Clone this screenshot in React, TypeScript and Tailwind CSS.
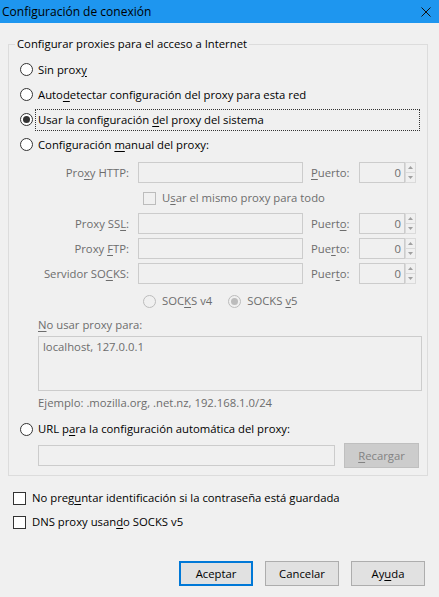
import React from 'react';
import clsx from 'clsx';

const U = ({ children }: { children: React.ReactNode }) => (
  <span className="underline decoration-1 underline-offset-[2px]">{children}</span>
);

const Radio = ({ checked, disabled }: { checked?: boolean; disabled?: boolean }) => (
  <span
    className={clsx(
      'flex h-[13px] w-[13px] shrink-0 items-center justify-center rounded-full border',
      disabled ? 'border-[#bcbcbc] bg-[#f0f0f0]' : 'border-[#333333] bg-white'
    )}
  >
    {checked && (
      <span
        className={clsx(
          'h-[7px] w-[7px] rounded-full',
          disabled ? 'bg-[#bcbcbc]' : 'bg-[#333333]'
        )}
      />
    )}
  </span>
);

const Checkbox = ({ disabled }: { disabled?: boolean }) => (
  <span
    className={clsx(
      'block h-[13px] w-[13px] shrink-0 border',
      disabled ? 'border-[#bcbcbc] bg-[#f0f0f0]' : 'border-[#333333] bg-white'
    )}
  />
);

const DisabledInput = ({ className }: { className?: string }) => (
  <div className={clsx('h-[21px] border border-[#cccccc] bg-[#f0f0f0]', className)} />
);

const PortBox = () => (
  <div className="flex h-[21px] items-stretch">
    <div className="flex w-[46px] items-center justify-end border border-[#cccccc] pr-[3px] text-[#6d6d6d]">
      0
    </div>
    <div className="flex w-[11px] flex-col border border-[#dadada]">
      <div className="flex flex-1 items-center justify-center border-b border-[#dadada]">
        <svg width="5" height="3" viewBox="0 0 5 3">
          <path d="M0 3 L2.5 0 L5 3 Z" fill="#a0a0a0" />
        </svg>
      </div>
      <div className="flex flex-1 items-center justify-center">
        <svg width="5" height="3" viewBox="0 0 5 3">
          <path d="M0 0 L2.5 3 L5 0 Z" fill="#a0a0a0" />
        </svg>
      </div>
    </div>
  </div>
);

type ProxyRowProps = {
  label: React.ReactNode;
  port: React.ReactNode;
  className?: string;
};

const ProxyRow = ({ label, port, className }: ProxyRowProps) => (
  <div className={clsx('flex h-[21px] items-center text-[#6d6d6d]', className)}>
    <span className="w-[109px] text-right">{label}</span>
    <DisabledInput className="ml-[9px] w-[165px]" />
    <span className="ml-[8px] w-[48px]">{port}</span>
    <PortBox />
  </div>
);

const Button = ({
  children,
  primary,
}: {
  children: React.ReactNode;
  primary?: boolean;
}) => (
  <button
    className={clsx(
      'flex h-[25px] w-[74px] items-center justify-center bg-[#e1e1e1] text-black',
      primary ? 'border-2 border-[#0078d7]' : 'border border-[#adadad]'
    )}
  >
    <span>{children}</span>
  </button>
);

export default function App() {
  return (
    <div className="flex h-[597px] w-[439px] flex-col bg-[#f0f0f0] font-['Segoe_UI','Open_Sans',sans-serif] text-[11.3px] leading-[16px] text-black">
      <div className="flex h-[23px] shrink-0 items-center justify-between bg-[#1e96ef] pl-[2px] pr-[8px] text-[12px]">
        <span>Configuración de conexión</span>
        <svg width="10" height="10" viewBox="0 0 10 10">
          <path d="M0.5 0.5 L9.5 9.5 M9.5 0.5 L0.5 9.5" stroke="#111" strokeWidth="1" />
        </svg>
      </div>

      <fieldset className="ml-[8px] mt-[13px] w-[420px] border border-[#dcdcdc] p-0 pb-[7px]">
        <legend className="ml-[6px] px-[2px] leading-[16px]">
          Configurar proxies para el acceso a Internet
        </legend>
        <div className="flex flex-col pl-[11px]">
          <div className="mt-[5px] flex h-[25px] items-center">
            <Radio />
            <span className="ml-[5px]">
              Sin prox<U>y</U>
            </span>
          </div>
          <div className="flex h-[25px] items-center">
            <Radio />
            <span className="ml-[5px]">
              Auto<U>d</U>etectar configuración del proxy para esta red
            </span>
          </div>
          <div className="flex h-[25px] items-center">
            <Radio checked />
            <span className="ml-[2px] flex h-[22px] w-[385px] items-center border border-dotted border-[#333333] pl-[2px]">
              <span>
                Usar la configuración <U>d</U>el proxy del sistema
              </span>
            </span>
          </div>
          <div className="flex h-[25px] items-center">
            <Radio />
            <span className="ml-[5px]">
              Configuración <U>m</U>anual del proxy:
            </span>
          </div>

          <ProxyRow
            className="mt-[5px]"
            label={
              <>
                Pro<U>x</U>y HTTP:
              </>
            }
            port={
              <>
                <U>P</U>uerto:
              </>
            }
          />
          <div className="mt-[3px] flex h-[24px] items-center pl-[123px] text-[#6d6d6d]">
            <Checkbox disabled />
            <span className="ml-[6px]">
              U<U>s</U>ar el mismo proxy para todo
            </span>
          </div>
          <ProxyRow
            className="mt-[3px]"
            label={
              <>
                Proxy SS<U>L</U>:
              </>
            }
            port={
              <>
                Puert<U>o</U>:
              </>
            }
          />
          <ProxyRow
            className="mt-[4px]"
            label={
              <>
                Proxy <U>F</U>TP:
              </>
            }
            port={
              <>
                Pue<U>r</U>to:
              </>
            }
          />
          <ProxyRow
            className="mt-[4px]"
            label={
              <>
                Servidor SO<U>C</U>KS:
              </>
            }
            port={
              <>
                Puer<U>t</U>o:
              </>
            }
          />

          <div className="mt-[5px] flex h-[24px] items-center pl-[123px] text-[#6d6d6d]">
            <Radio disabled />
            <span className="ml-[6px]">
              SOC<U>K</U>S v4
            </span>
            <span className="ml-[16px]">
              <Radio disabled checked />
            </span>
            <span className="ml-[6px]">
              SOCKS <U>v</U>5
            </span>
          </div>

          <div className="ml-[18px] mt-[4px] h-[16px] text-[#6d6d6d]">
            <U>N</U>o usar proxy para:
          </div>
          <div className="ml-[18px] mt-[3px] h-[55px] w-[384px] border border-[#cccccc] px-[4px] pt-[2px] text-[#6d6d6d]">
            localhost, 127.0.0.1
          </div>
          <div className="ml-[18px] mt-[4px] h-[16px] text-[#6d6d6d]">
            Ejemplo: .mozilla.org, .net.nz, 192.168.1.0/24
          </div>

          <div className="mt-[6px] flex h-[24px] items-center">
            <Radio />
            <span className="ml-[5px]">
              URL p<U>a</U>ra la configuración automática del proxy:
            </span>
          </div>
          <div className="mt-[2px] flex h-[25px] items-center pl-[18px]">
            <DisabledInput className="w-[297px]" />
            <div className="ml-[9px] flex h-[25px] w-[75px] items-center justify-center border border-[#bfbfbf] bg-[#cccccc] text-[#838383]">
              <span>
                <U>R</U>ecargar
              </span>
            </div>
          </div>
        </div>
      </fieldset>

      <div className="mt-[10px] flex h-[24px] items-center pl-[13px]">
        <Checkbox />
        <span className="ml-[6px]">
          No preg<U>u</U>ntar identificación si la contraseña está guardada
        </span>
      </div>
      <div className="flex h-[24px] items-center pl-[13px]">
        <Checkbox />
        <span className="ml-[6px]">
          DNS proxy usan<U>d</U>o SOCKS v5
        </span>
      </div>

      <div className="mt-[27px] flex justify-end gap-[12px] pr-[14px]">
        <Button primary>Aceptar</Button>
        <Button>Cancelar</Button>
        <Button>
          Ay<U>u</U>da
        </Button>
      </div>
    </div>
  );
}
